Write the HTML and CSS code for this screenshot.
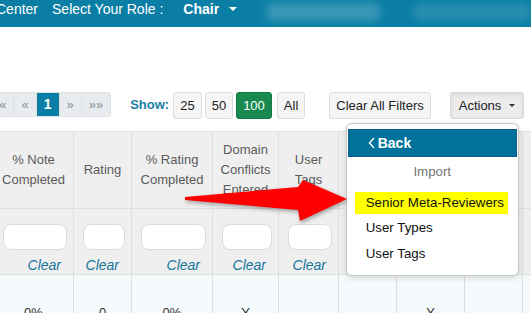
FILE: index.html
```html
<!doctype html>
<html lang="en">
<head>
  <meta charset="utf-8">
  <link rel="stylesheet" href="styles.css">
</head>
<body>

  <div class="topbar">
    <span class="nav-link nav-cut">Center</span>
    <span class="nav-link nav-role">Select Your Role :</span>
    <span class="role-current">Chair <span class="caret caret-white"></span></span>
    <span class="blur blur-name"></span>
    <span class="blur blur-user"></span>
  </div>

  <div class="toolbar">
    <div class="pagination">
      <span class="page-link">&laquo;&laquo;</span>
      <span class="page-link">&laquo;</span>
      <span class="page-link active">1</span>
      <span class="page-link">&raquo;</span>
      <span class="page-link">&raquo;&raquo;</span>
    </div>

    <span class="show-label">Show:</span>
    <div class="page-size">
      <button class="btn">25</button>
      <button class="btn">50</button>
      <button class="btn btn-green">100</button>
    </div>
    <button class="btn btn-all">All</button>
    <button class="btn btn-clear">Clear All Filters</button>

    <div class="dropdown">
      <button class="btn btn-actions">Actions <span class="caret caret-dark"></span></button>
      <div class="dropdown-menu">
        <div class="menu-back">
          <svg width="7" height="12" viewBox="0 0 7 12"><path d="M6 1 L1.5 6 L6 11" fill="none" stroke="#fff" stroke-width="1.4"/></svg>
          Back
        </div>
        <div class="menu-header">Import</div>
        <div class="menu-item highlight">Senior Meta-Reviewers</div>
        <div class="menu-item">User Types</div>
        <div class="menu-item">User Tags</div>
      </div>
    </div>
  </div>

  <table class="grid">
    <colgroup>
      <col style="width:80px">
      <col style="width:58px">
      <col style="width:81px">
      <col style="width:66px">
      <col style="width:60px">
      <col style="width:58px">
      <col style="width:68px">
      <col style="width:58px">
      <col style="width:60px">
    </colgroup>
    <tr class="head-row">
      <th>% Note Completed</th>
      <th>Rating</th>
      <th>% Rating Completed</th>
      <th>Domain Conflicts Entered</th>
      <th>User Tags</th>
      <th>User Types</th>
      <th>Senior Meta</th>
      <th>Status</th>
      <th></th>
    </tr>
    <tr class="filter-row">
      <td><input class="filter-input"><div class="clear-link">Clear</div></td>
      <td><input class="filter-input"><div class="clear-link">Clear</div></td>
      <td><input class="filter-input"><div class="clear-link">Clear</div></td>
      <td><input class="filter-input"><div class="clear-link">Clear</div></td>
      <td><input class="filter-input"><div class="clear-link">Clear</div></td>
      <td><input class="filter-input"><div class="clear-link">Clear</div></td>
      <td><input class="filter-input"><div class="clear-link">Clear</div></td>
      <td><input class="filter-input"><div class="clear-link">Clear</div></td>
      <td></td>
    </tr>
    <tr class="data-row">
      <td>0%</td>
      <td>0</td>
      <td>0%</td>
      <td>Y</td>
      <td></td>
      <td></td>
      <td>Y</td>
      <td></td>
      <td></td>
    </tr>
  </table>

  <svg class="pointer-arrow" width="175" height="60" viewBox="0 0 175 60">
    <polygon points="5,27 118,17 123,10 167,29 120,51 118,40 5,30" fill="#ff0000"/>
  </svg>

</body>
</html>
```

FILE: styles.css
```css
html, body {
  margin: 0;
  padding: 0;
  font-family: "Liberation Sans", Arial, sans-serif;
  background-color: #fff;
  overflow: hidden;
}

body {
  position: relative;
  height: 313px;
}

/* top navigation bar */
.topbar {
  display: flex;
  align-items: flex-start;
  height: 27px;
  padding-top: 1px;
  box-sizing: border-box;
  background-color: #0a7ea5;
  color: #fff;
  font-size: 14px;
  line-height: 17px;
  white-space: nowrap;
}

.nav-cut {
  margin-left: -4px;
}

.nav-role {
  margin-left: 14px;
}

.role-current {
  margin-left: 20px;
  font-weight: bold;
}

.caret {
  display: inline-block;
  width: 0;
  height: 0;
  border-left: 4px solid transparent;
  border-right: 4px solid transparent;
  vertical-align: middle;
}

.caret-white {
  margin-left: 6px;
  border-top: 4px solid #fff;
  margin-top: -3px;
}

.caret-dark {
  margin-left: 4px;
  border-left-width: 3px;
  border-right-width: 3px;
  border-top: 3px solid #333;
  margin-top: -2px;
}

.blur {
  display: block;
  height: 18px;
  margin-top: 2px;
  background-color: rgba(255, 255, 255, 0.2);
  filter: blur(4px);
  border-radius: 6px;
}

.blur-name {
  width: 115px;
  margin-left: 29px;
}

.blur-user {
  width: 120px;
  margin-left: 33px;
  background-color: rgba(255, 255, 255, 0.12);
}

/* toolbar */
.toolbar {
  display: flex;
  align-items: flex-start;
  margin-top: 65px;
  margin-left: -16px;
  font-size: 13px;
  white-space: nowrap;
}

.pagination {
  display: flex;
  height: 25px;
  box-sizing: border-box;
  border: 1px solid #dde1e5;
  border-radius: 3px;
  background-color: #e9ecef;
  overflow: hidden;
}

.page-link {
  padding: 0 7px;
  line-height: 23px;
  color: #8a8f94;
  border-left: 1px solid #dee2e6;
}

.page-link:first-child {
  border-left: 0;
}

.page-link.active {
  background-color: #0a7ea5;
  color: #fff;
  font-weight: bold;
  font-size: 14px;
}

.show-label {
  margin-left: 19px;
  line-height: 25px;
  font-weight: bold;
  color: #1a80a6;
}

.page-size {
  display: flex;
  gap: 3px;
  margin-left: 4px;
}

.btn {
  height: 27px;
  padding: 0 6px;
  font-family: inherit;
  font-size: 13px;
  color: #222;
  background-color: #f5f5f5;
  border: 1px solid #dcdcdc;
  border-radius: 3px;
}

.btn-green {
  min-width: 35px;
  background-color: #198a4f;
  border-color: #157744;
  color: #fff;
}

.btn-all {
  margin-left: 5px;
}

.btn-clear {
  margin-left: 24px;
  min-width: 101px;
}

.dropdown {
  position: relative;
  margin-left: 19px;
}

.btn-actions {
  min-width: 70px;
  padding: 0 8px;
  background-color: #ececec;
  border-color: #d8d8d8;
  box-shadow: inset 0 2px 4px rgba(0, 0, 0, 0.08);
}

/* actions menu */
.dropdown-menu {
  position: absolute;
  top: 31px;
  left: -104px;
  width: 173px;
  box-sizing: border-box;
  padding: 5px 1px 10px 1px;
  background-color: #fff;
  border: 1px solid #c8c8c8;
  border-radius: 6px;
  box-shadow: 0 2px 6px rgba(0, 0, 0, 0.15);
  z-index: 5;
  font-size: 13.3px;
}

.menu-back {
  display: flex;
  align-items: center;
  gap: 3px;
  height: 28px;
  box-sizing: border-box;
  padding-left: 19px;
  background-color: #01739b;
  border: 1px solid #0d5c8a;
  color: #fff;
  font-size: 14px;
  font-weight: bold;
}

.menu-header {
  margin-top: 5px;
  line-height: 20px;
  text-align: center;
  color: #777;
}

.menu-item {
  margin: 4px 9px 0 7px;
  padding-left: 11px;
  line-height: 22px;
  color: #111;
}

.menu-item.highlight {
  margin-top: 10px;
  background-color: #ffff00;
}

.menu-item.highlight + .menu-item {
  margin-top: 3px;
}

/* table */
.grid {
  width: 589px;
  margin-top: 12px;
  margin-left: -7px;
  border-collapse: collapse;
  table-layout: fixed;
  font-size: 13px;
}

.grid th,
.grid td {
  border: 1px solid #dedede;
  padding: 0;
}

.head-row th {
  height: 76px;
  padding: 0 6px;
  background-color: #efefef;
  font-weight: normal;
  color: #5a5a5a;
  line-height: 20px;
  text-align: center;
  vertical-align: middle;
}

.filter-row td {
  height: 66px;
  background-color: #efefef;
  padding: 15px 6px 0 9px;
  vertical-align: top;
  box-sizing: border-box;
}

.filter-input {
  display: block;
  width: 100%;
  height: 26px;
  box-sizing: border-box;
  border: 1px solid #dcdcdc;
  border-radius: 8px;
  background-color: #fff;
}

.clear-link {
  padding-right: 6px;
  text-align: right;
  font-size: 14px;
  font-style: italic;
  line-height: 18px;
  margin-top: 6px;
  color: #16779b;
}

.data-row td {
  height: 60px;
  background-color: #f5fafd;
  color: #333;
  text-align: center;
  vertical-align: top;
  padding-top: 28px;
  line-height: 20px;
}

.pointer-arrow {
  position: absolute;
  left: 180px;
  top: 170px;
  filter: drop-shadow(1px 2px 2px rgba(0, 0, 0, 0.35));
  z-index: 6;
}
```
